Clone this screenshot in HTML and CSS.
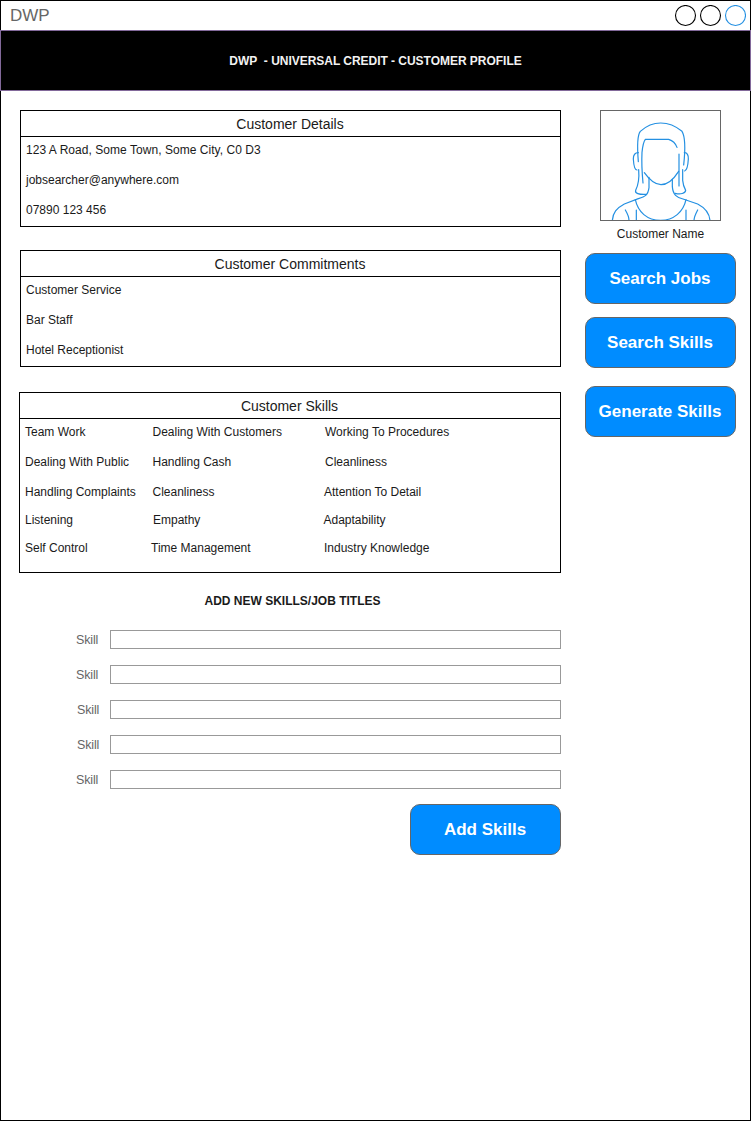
FILE: index.html
```html
<!DOCTYPE html>
<html lang="en">
<head>
<meta charset="utf-8">
<title>DWP - Customer Profile</title>
<link rel="stylesheet" href="styles.css">
</head>
<body>
<div class="window">
  <div class="titlebar">
    <span class="titlebar-name">DWP</span>
    <svg class="controls" width="72" height="22" viewBox="0 0 72 22">
      <circle cx="11.5" cy="10.5" r="10"/>
      <circle cx="36.5" cy="10.5" r="10"/>
      <circle class="accent" cx="61.5" cy="10.5" r="10"/>
    </svg>
  </div>
  <header class="banner"><h1 class="banner-text">DWP&nbsp; - UNIVERSAL CREDIT - CUSTOMER PROFILE</h1></header>
  <div class="content">
    <main class="main">
      <section class="panel">
        <h2 class="panel-title">Customer Details</h2>
        <ul class="lines">
          <li class="address">123 A Road, Some Town, Some City, C0 D3</li>
          <li>jobsearcher@anywhere.com</li>
          <li>07890 123 456</li>
        </ul>
      </section>
      <section class="panel">
        <h2 class="panel-title">Customer Commitments</h2>
        <ul class="lines">
          <li>Customer Service</li>
          <li>Bar Staff</li>
          <li>Hotel Receptionist</li>
        </ul>
      </section>
      <section class="panel panel-skills">
        <h2 class="panel-title">Customer Skills</h2>
        <div class="skills">
          <div class="skill-row"><span>Team Work</span><span>Dealing With Customers</span><span>Working To Procedures</span></div>
          <div class="skill-row"><span>Dealing With Public</span><span>Handling Cash</span><span>Cleanliness</span></div>
          <div class="skill-row row-c"><span>Handling Complaints</span><span>Cleanliness</span><span>Attention To Detail</span></div>
          <div class="skill-row row-d"><span>Listening</span><span>Empathy</span><span>Adaptability</span></div>
          <div class="skill-row row-e"><span>Self Control</span><span>Time Management</span><span>Industry Knowledge</span></div>
        </div>
      </section>
      <h2 class="form-title">ADD NEW SKILLS/JOB TITLES</h2>
      <form class="form">
        <label class="field"><span class="field-label">Skill</span><input class="field-input" type="text"></label>
        <label class="field"><span class="field-label">Skill</span><input class="field-input" type="text"></label>
        <label class="field field-in"><span class="field-label">Skill</span><input class="field-input" type="text"></label>
        <label class="field field-in"><span class="field-label">Skill</span><input class="field-input" type="text"></label>
        <label class="field"><span class="field-label">Skill</span><input class="field-input" type="text"></label>
        <button class="button button-add" type="button">Add Skills</button>
      </form>
    </main>
    <aside class="side">
      <svg class="avatar" width="121" height="111" viewBox="30 30 363 333">
        <g class="avatar-lines">
          <path d="M145 185 C142 148 142 105 151 94 C171 76 190 69 212 69 C235 69 257 78 276 94 C285 109 286 150 281 195"/>
          <path d="M159 249 C155 207 155 177 156 157 C158 138 162 123 166 118 L236 118 C249 122 257 131 261 142"/>
          <path d="M145 158 C133 158 130 166 130 177 C131 194 135 210 141 210"/>
          <path d="M283 158 C291 157 296 166 295 177 C294 195 290 211 284 213"/>
          <path d="M163 218 C178 239 195 254 213 254 C232 254 250 239 266 214"/>
          <path d="M267 162 L267 258"/>
          <path d="M146 209 C148 233 145 255 137 271 C134 280 147 284 168 283"/>
          <path d="M278 209 L278 241 C279 253 283 264 287 271 C286 280 271 284 256 280"/>
          <path d="M177 232 L177 263 C174 287 164 290 145 296 L103 312 C79 325 69 337 67 361"/>
          <path d="M247 238 L247 260 C249 285 260 292 279 297 L323 312 C348 325 358 339 360 361"/>
          <path d="M136 299 C144 336 171 361 212 361 C251 361 280 336 288 299"/>
          <path d="M106 330 C113 342 117 352 117 361"/>
          <path d="M139 330 L139 361"/>
          <path d="M288 330 L288 361"/>
          <path d="M323 330 C315 345 312 352 312 361"/>
        </g>
        <rect class="avatar-frame" x="31.5" y="31.5" width="360" height="330"/>
      </svg>
      <div class="customer-name">Customer Name</div>
      <button class="button" type="button">Search Jobs</button>
      <button class="button button-skills" type="button">Search Skills</button>
      <button class="button button-generate" type="button">Generate Skills</button>
    </aside>
  </div>
</div>
</body>
</html>
```

FILE: styles.css
```css
* { box-sizing: border-box; }
body {
  margin: 0;
  background: #fff;
  color: #1a1a1a;
  font: 12px/26px "Liberation Sans", Arial, sans-serif;
}
h1, h2, ul { margin: 0; padding: 0; font-weight: normal; }
ul { list-style: none; }

.window { width: 751px; height: 1121px; border: 1px solid #000; }
.titlebar {
  display: flex;
  align-items: center;
  justify-content: space-between;
  height: 29px;
  padding: 0 4px 0 9px;
}
.titlebar-name { font-size: 17px; color: #666; }
.controls { display: block; fill: #fff; stroke: #000; stroke-width: 1.1; }
.controls .accent { stroke: #2490e2; }

.banner {
  display: flex;
  align-items: center;
  justify-content: center;
  height: 61px;
  margin: 0 -1px;
  background: #000;
  border: 1px solid #82699a;
}
.banner-text { font-size: 12px; font-weight: bold; letter-spacing: -0.03px; color: #f2f2f2; white-space: pre; }

.content { display: flex; gap: 24px; padding: 19px 0 0 18px; }
.main { display: flex; flex-direction: column; width: 542px; }
.panel {
  height: 117px;
  margin: 0 0 23px 1px;
  border: 1px solid #000;
}
.panel-skills { height: 181px; margin: 2px 0 0; }
.panel-title {
  height: 26px;
  padding-right: 1px;
  border-bottom: 1px solid #000;
  font-size: 14px;
  line-height: 26px;
  text-align: center;
}
.lines { display: flex; flex-direction: column; gap: 4px; padding-left: 5px; }
.address { letter-spacing: 0.045px; }
.skills { padding-left: 5px; }
.skill-row { display: grid; grid-template-columns: 127.5px 172.5px 1fr; height: 30px; white-space: nowrap; }
.row-c { grid-template-columns: 127.5px 171.5px 1fr; height: 28px; }
.row-d { grid-template-columns: 128px 170.5px 1fr; height: 28px; }
.row-e { grid-template-columns: 126px 173px 1fr; height: 28px; }

.form-title {
  margin-top: 15px;
  padding-left: 5px;
  font-size: 12px;
  font-weight: bold;
  text-align: center;
}
.form { display: flex; flex-direction: column; gap: 16px; margin-top: 16px; }
.field { display: flex; align-items: center; height: 19px; padding-left: 57px; }
.field-label { width: 34px; font-size: 12.5px; letter-spacing: -0.15px; color: #666; }
.field-in .field-label { padding-left: 1px; }
.field-input {
  flex: 1;
  height: 19px;
  padding: 0 4px;
  border: 1px solid #999;
  background: #fff;
}

.button {
  width: 151px;
  height: 51px;
  padding: 0 1px 0 0;
  border: 1px solid #666;
  border-radius: 10px;
  background: #008cff;
  color: #fff;
  font: bold 17px "Liberation Sans", Arial, sans-serif;
}
.button-add { align-self: flex-end; margin-top: -1px; }
.button-skills { margin-top: 13px; }
.button-generate { margin-top: 18px; }

.side { display: flex; flex-direction: column; align-items: center; width: 151px; }
.avatar { display: block; }
.avatar-lines { fill: none; stroke: #2490e2; stroke-width: 3.6; stroke-linecap: round; stroke-linejoin: round; }
.avatar-frame { fill: none; stroke: #666; stroke-width: 3; }
.customer-name { height: 32px; }
```
